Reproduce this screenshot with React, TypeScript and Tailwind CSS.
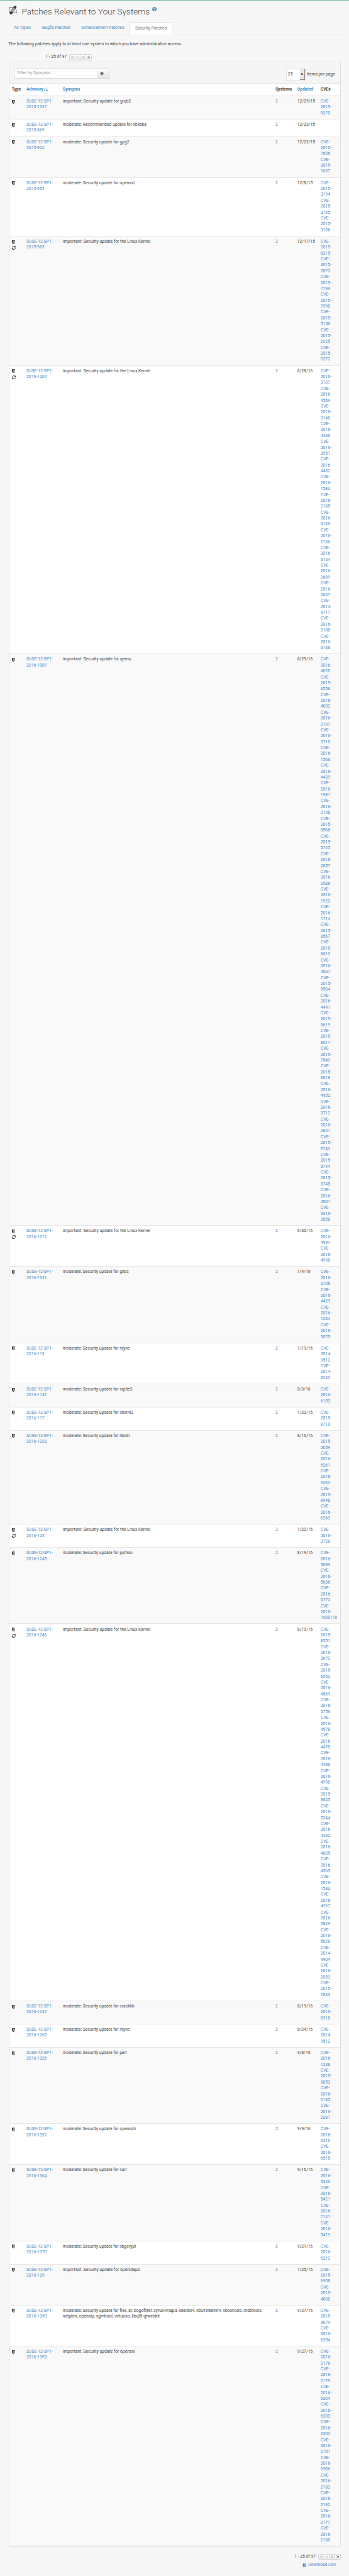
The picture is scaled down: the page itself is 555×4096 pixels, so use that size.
import React from "react";
import { FaQuestionCircle, FaSortAmountDownAlt, FaFileCsv } from "react-icons/fa";

type Patch = {
  id: string;
  synopsis: string;
  date: string;
  reboot?: boolean;
  cves: string[];
};

const patches: Patch[] = [
  { id: "2015-1027", synopsis: "important: Security update for grub2", date: "12/29/15", cves: ["2015-8370"] },
  { id: "2015-869", synopsis: "moderate: Recommended update for libksba", date: "12/23/15", cves: [] },
  { id: "2015-922", synopsis: "moderate: Security update for gpg2", date: "12/22/15", cves: ["2015-1606", "2015-1607"] },
  { id: "2015-954", synopsis: "moderate: Security update for openssl", date: "12/8/15", cves: ["2015-3194", "2015-3195", "2015-3196"] },
  {
    id: "2015-985", synopsis: "important: Security update for the Linux Kernel", date: "12/17/15", reboot: true,
    cves: ["2015-8215", "2015-7872", "2015-7799", "2015-7990", "2015-5156", "2015-2925", "2015-0272"],
  },
  {
    id: "2016-1004", synopsis: "important: Security update for the Linux Kernel", date: "6/28/16", reboot: true,
    cves: ["2016-3137", "2016-4569", "2016-3140", "2016-4486", "2016-3951", "2016-4482", "2016-1583", "2016-2185", "2016-3136", "2016-2186", "2016-3134", "2016-3689", "2016-2847", "2014-9717", "2016-2188", "2016-3138"],
  },
  {
    id: "2016-1007", synopsis: "important: Security update for qemu", date: "6/29/16",
    cves: ["2016-4020", "2015-8558", "2016-4002", "2016-2197", "2016-3710", "2016-1568", "2016-4439", "2016-1981", "2016-2198", "2015-8568", "2015-5745", "2016-2857", "2016-2538", "2016-1922", "2016-1714", "2015-8567", "2015-8613", "2016-4037", "2015-8504", "2016-4441", "2015-8619", "2015-8817", "2015-7549", "2015-8818", "2016-4952", "2016-3712", "2016-2841", "2015-8743", "2015-8744", "2015-8745", "2016-4001", "2016-2858"],
  },
  { id: "2016-1012", synopsis: "important: Security update for the Linux Kernel", date: "6/30/16", reboot: true, cves: ["2016-4997", "2016-4998"] },
  { id: "2016-1021", synopsis: "moderate: Security update for glibc", date: "7/4/16", cves: ["2016-3706", "2016-4429", "2016-1234", "2016-3075"] },
  { id: "2016-113", synopsis: "moderate: Security update for rsync", date: "1/19/16", cves: ["2014-9512", "2014-8242"] },
  { id: "2016-1141", synopsis: "moderate: Security update for sqlite3", date: "8/3/16", cves: ["2016-6153"] },
  { id: "2016-117", synopsis: "moderate: Security update for libxml2", date: "1/20/16", cves: ["2015-8710"] },
  { id: "2016-1228", synopsis: "moderate: Security update for libidn", date: "8/16/16", cves: ["2015-2059", "2016-6261", "2016-6262", "2015-8948", "2016-6263"] },
  { id: "2016-124", synopsis: "important: Security update for the Linux Kernel", date: "1/20/16", reboot: true, cves: ["2016-0728"] },
  { id: "2016-1245", synopsis: "moderate: Security update for python", date: "8/19/16", cves: ["2016-5699", "2016-5636", "2016-0772", "2016-1000110"] },
  {
    id: "2016-1246", synopsis: "important: Security update for the Linux Kernel", date: "8/19/16", reboot: true,
    cves: ["2015-8551", "2016-3672", "2015-8552", "2016-4569", "2016-0758", "2016-4578", "2016-4470", "2016-4486", "2016-4998", "2015-8845", "2016-5244", "2016-4482", "2016-4805", "2016-4565", "2016-1583", "2016-4997", "2016-5829", "2016-5828", "2014-9904", "2016-2053", "2015-7833"],
  },
  { id: "2016-1247", synopsis: "moderate: Security update for cracklib", date: "8/19/16", cves: ["2016-6318"] },
  { id: "2016-1267", synopsis: "moderate: Security update for rsync", date: "8/24/16", cves: ["2014-9512"] },
  { id: "2016-1326", synopsis: "moderate: Security update for perl", date: "9/8/16", cves: ["2016-1238", "2015-8853", "2016-6185", "2016-2381"] },
  { id: "2016-1332", synopsis: "moderate: Security update for openssh", date: "9/9/16", cves: ["2016-6210", "2016-6515"] },
  { id: "2016-1364", synopsis: "moderate: Security update for curl", date: "9/16/16", cves: ["2016-5420", "2016-5421", "2016-7141", "2016-5419"] },
  { id: "2016-1370", synopsis: "moderate: Security update for libgcrypt", date: "9/21/16", cves: ["2016-6313"] },
  { id: "2016-139", synopsis: "important: Security update for openldap2", date: "1/25/16", cves: ["2015-6908", "2015-4000"] },
  {
    id: "2016-1390",
    synopsis: "moderate: Security update for flex, at, bogofilter, cyrus-imapd, kdelibs4, libQtWebKit4, libbonobo, mdbtools, netpbm, openslp, sgmltool, virtuoso, libqt5-qtwebkit",
    date: "9/27/16", cves: ["2015-8079", "2016-6354"],
  },
  {
    id: "2016-1393", synopsis: "important: Security update for openssl", date: "9/27/16",
    cves: ["2016-2178", "2016-2179", "2016-6304", "2016-6303", "2016-6302", "2016-2181", "2016-6306", "2016-2183", "2016-2182", "2016-2177", "2016-2180"],
  },
];

const columns = "grid grid-cols-[23.4px_57.7px_338.2px_34.8px_37px_1fr]";

function ShieldIcon() {
  return (
    <svg viewBox="256 128 1280 1536" className="block h-[6px] w-[5px]" fill="#444">
      <path d="M1344 960v-640h-448v1137q119-63 213-137 235-184 235-360zm192-768v768q0 86-33.5 170.5t-83 150-118 127.5-126.5 103-121 77.5-89.5 49.5-42.5 20q-12 6-26 6t-26-6q-16-7-42.5-20t-89.5-49.5-121-77.5-126.5-103-118-127.5-83-150-33.5-170.5v-768q0-26 19-45t45-19h1152q26 0 45 19t19 45z" />
    </svg>
  );
}

function RefreshIcon() {
  return (
    <svg viewBox="0 0 1536 1536" className="block h-[6px] w-[6px]" fill="#444">
      <path d="M1511 928q0 5-1 7-64 268-268 434.5t-478 166.5q-146 0-282.5-55t-243.5-157l-129 129q-19 19-45 19t-45-19-19-45v-448q0-26 19-45t45-19h448q26 0 45 19t19 45-19 45l-137 137q71 66 161 102t187 36q134 0 250-65t186-179q11-17 53-117 8-23 30-23h192q13 0 22.5 9.5t9.5 22.5zm25-800v448q0 26-19 45t-45 19h-448q-26 0-45-19t-19-45 19-45l138-138q-148-137-349-137-134 0-250 65t-186 179q-11 17-53 117-8 23-30 23h-199q-13 0-22.5-9.5t-9.5-22.5v-7q65-268 270-434.5t480-166.5q146 0 284 55.5t245 156.5l130-129q19-19 45-19t45 19 19 45z" />
    </svg>
  );
}

function PatchIcon() {
  return (
    <svg viewBox="0 0 26 27" className="block h-[14px] w-[13.5px]">
      <path d="M13 5H1.5v17M25 12v10H12" fill="none" stroke="#444" strokeWidth="1.5" />
      <g transform="translate(13 13.5) rotate(-56)">
        <rect x="-15" y="-4.5" width="30" height="9" rx="4.5" fill="#3f3f3f" />
        <rect x="-6.5" y="-4.5" width="13" height="9" fill="#f7f7f7" />
        <rect x="-5.5" y="-4" width="11" height="8" fill="#555" />
        <path d="M-5.5-1.4H5.5M-5.5 1.4H5.5M-2.2-4V4M2.2-4V4" stroke="#f7f7f7" strokeWidth="1" />
      </g>
    </svg>
  );
}

function Chevrons({ d }: { d: string }) {
  return (
    <svg viewBox="0 0 8 8" className="block h-[4.4px] w-[4.4px]" fill="none" stroke="currentColor" strokeWidth="1.5">
      <path d={d} />
    </svg>
  );
}

function Pager() {
  return (
    <div className="flex h-[9.4px] items-center">
      <span className="mr-[3.6px] whitespace-nowrap">1 - 25 of 97</span>
      <div className="flex h-[9.4px] w-[36px] items-stretch rounded-[1.5px] border border-[#d4d4d4] bg-linear-to-b from-white to-[#ececec] text-[#444]">
        <span className="flex w-[9.2px] items-center justify-center text-[#999]"><Chevrons d="M4 1L1 4L4 7M7.5 1L4.5 4L7.5 7" /></span>
        <span className="flex w-[8px] items-center justify-center border-l border-[#e2e2e2] text-[#999]"><Chevrons d="M5 1L2 4L5 7" /></span>
        <span className="flex w-[8.4px] items-center justify-center border-l border-[#d4d4d4]"><Chevrons d="M3 1L6 4L3 7" /></span>
        <span className="flex flex-1 items-center justify-center border-l border-[#d4d4d4]"><Chevrons d="M1 1L4 4L1 7M4.5 1L7.5 4L4.5 7" /></span>
      </div>
    </div>
  );
}

function Row({ patch, odd }: { patch: Patch; odd: boolean }) {
  return (
    <div className={`${columns} pt-[4.1px] pb-[4.75px] pl-[4.2px] ${odd ? "bg-[#f9f9f9]" : "bg-white"} not-first:shadow-[0_-1px_0_#e8e8e8]`}>
      <div>
        <div className="flex h-[9.37px] items-center"><ShieldIcon /></div>
        {patch.reboot && <div className="flex h-[9.37px] items-center"><RefreshIcon /></div>}
      </div>
      <a className="text-[#428bca]">SUSE-12-SP1-<br />{patch.id}</a>
      <div className="pr-[4px]">{patch.synopsis}</div>
      <a className="text-[#428bca]">2</a>
      <div>{patch.date}</div>
      <div className="text-[#428bca]">
        {patch.cves.map((cve) => {
          const [year, num] = cve.split("-");
          return (
            <a key={cve} className="block">CVE-<br />{year}-<br />{num}</a>
          );
        })}
      </div>
    </div>
  );
}

export default function App() {
  return (
    <div className="h-[4096px] w-[555px] overflow-hidden bg-[#f7f7f7] font-['Roboto',sans-serif] text-[6.76px] leading-[9.37px] text-[#444]">
      <div className="h-px bg-[#7bbfa8]" />
      <div className="pr-[13.5px] pl-[13.5px]">
        <div className="flex h-[33.9px] items-start pt-[7.6px]">
          <PatchIcon />
          <h1 className="ml-[7.4px] text-[13.6px] leading-[19px] font-light whitespace-nowrap">Patches Relevant to Your Systems</h1>
          <FaQuestionCircle className="mt-[2.2px] ml-[4px] h-[7.2px] w-[7.2px] text-[#428bca]" />
        </div>

        <div className="flex h-[20.8px] items-stretch border-b border-[#e4e4e4] text-[#428bca]">
          <span className="flex w-[45.2px] items-center pl-[8.4px]">All Types</span>
          <span className="flex w-[63px] items-center pl-[8.4px]">Bugfix Patches</span>
          <span className="flex w-[84.8px] items-center pl-[8.4px]">Enhancement Patches</span>
          <span className="-mb-px flex w-[67.2px] items-center rounded-t-[2px] border border-b-0 border-[#e2e2e2] bg-white pl-[7.4px] text-[#777]">Security Patches</span>
        </div>

        <p className="mt-[10px]">The following patches apply to at least one system to which you have administrative access.</p>

        <div className="mt-[11.2px] pl-[58.8px]"><Pager /></div>

        <div className="mt-[2.8px] rounded-[2px] border border-[#e0e0e0] bg-white shadow-[0_0.5px_0.5px_rgba(0,0,0,0.05)]">
          <div className="flex h-[34px] items-start justify-between border-b border-[#e4e4e4] bg-[#f5f5f5] pt-[9.6px] pr-[7.8px] pl-[7.6px]">
            <div className="flex h-[15.6px] w-[152px] rounded-[2px] border border-[#d6d6d6] bg-white">
              <span className="flex flex-1 items-center pl-[4.4px] text-[#999]">Filter by Synopsis:</span>
              <span className="flex w-[19.6px] items-center justify-center border-l border-[#dcdcdc] bg-linear-to-b from-white to-[#e6e6e6] pr-[4px]">
                <svg viewBox="0 0 12 12" className="block h-[5.8px] w-[5.8px]">
                  <circle cx="6" cy="6" r="5.2" fill="none" stroke="#666" strokeWidth="1.2" />
                  <circle cx="6.2" cy="6" r="3.8" fill="#444" />
                  <path d="M4 6A2 2 0 0 1 6 4" stroke="#fff" strokeWidth="1" fill="none" />
                </svg>
              </span>
            </div>
            <div className="flex items-center">
              <div className="flex h-[18.6px] w-[31.2px] items-center justify-between border border-[#e0e0e0] bg-white pl-[1.8px]">
                <span>25</span>
                <span className="flex h-[16.6px] w-[8.4px] items-center justify-center border-r border-b border-[#8d8984] bg-[#ece8e4]">
                  <svg viewBox="0 0 8 5" className="block h-[2.6px] w-[4.2px]"><path d="M0 0H8L4 5Z" fill="#000" /></svg>
                </span>
              </div>
              <span className="ml-[1.8px] whitespace-nowrap">items per page</span>
            </div>
          </div>

          <div className={`${columns} h-[19.5px] border-b border-[#dddddd] pt-[4.6px] pl-[4.2px] font-bold`}>
            <div>Type</div>
            <div className="flex items-start text-[#428bca]">
              Advisory
              <FaSortAmountDownAlt className="mt-[0.6px] ml-[1.4px] h-[6.8px] w-[6.8px]" />
            </div>
            <div className="text-[#428bca]">Synopsis</div>
            <div>Systems</div>
            <div className="text-[#428bca]">Updated</div>
            <div>CVEs</div>
          </div>
          <div className="overflow-hidden rounded-b-[2px]">
            {patches.map((patch, i) => (
              <Row key={patch.id} patch={patch} odd={i % 2 === 0} />
            ))}
          </div>
        </div>

        <div className="mt-[10.6px] flex justify-end"><Pager /></div>
        <div className="mt-[4.1px] flex items-center justify-end pr-[6.8px] text-[#428bca]">
          <FaFileCsv className="mr-[3.4px] h-[6.6px] w-[6.2px]" />
          <span>Download CSV</span>
        </div>
      </div>
    </div>
  );
}
